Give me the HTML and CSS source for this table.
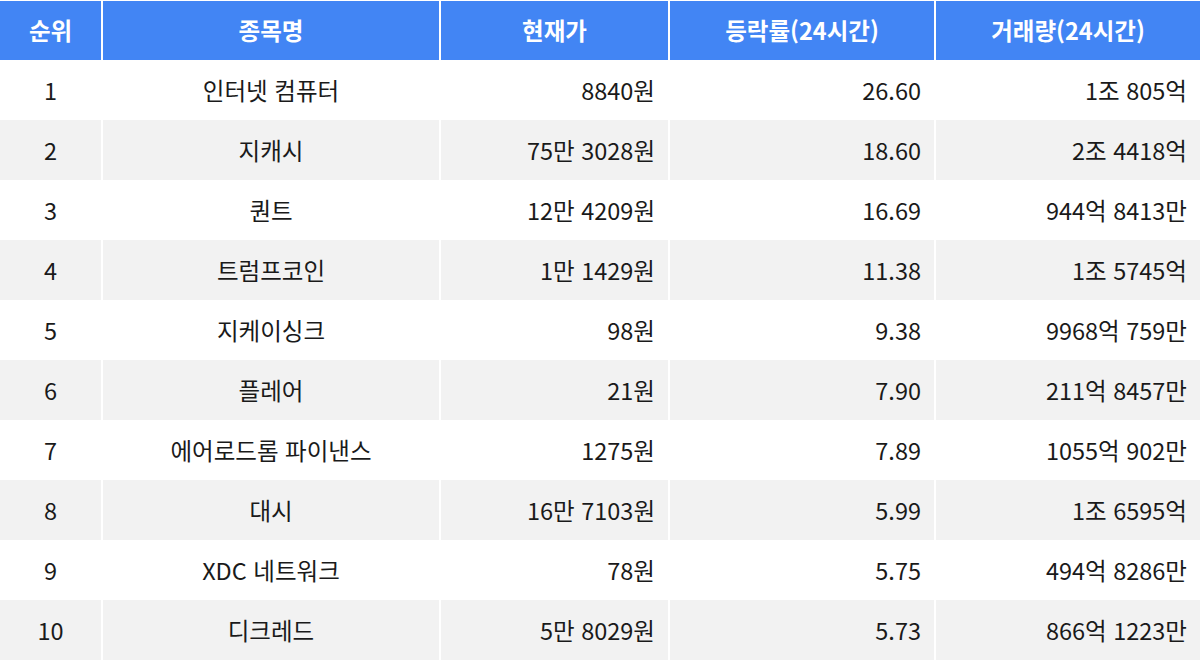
FILE: index.html
```html
<!DOCTYPE html>
<html lang="ko">
<head>
<meta charset="utf-8">
<link rel="stylesheet" href="styles.css">
</head>
<body>
<div class="table">
  <div class="row head">
    <div class="cell c">순위</div>
    <div class="cell c">종목명</div>
    <div class="cell c">현재가</div>
    <div class="cell c">등락률(24시간)</div>
    <div class="cell c">거래량(24시간)</div>
  </div>
  <div class="row">
    <div class="cell c">1</div><div class="cell c">인터넷 컴퓨터</div><div class="cell r">8840원</div><div class="cell r">26.60</div><div class="cell r">1조 805억</div>
  </div>
  <div class="row alt">
    <div class="cell c">2</div><div class="cell c">지캐시</div><div class="cell r">75만 3028원</div><div class="cell r">18.60</div><div class="cell r">2조 4418억</div>
  </div>
  <div class="row">
    <div class="cell c">3</div><div class="cell c">퀀트</div><div class="cell r">12만 4209원</div><div class="cell r">16.69</div><div class="cell r">944억 8413만</div>
  </div>
  <div class="row alt">
    <div class="cell c">4</div><div class="cell c">트럼프코인</div><div class="cell r">1만 1429원</div><div class="cell r">11.38</div><div class="cell r">1조 5745억</div>
  </div>
  <div class="row">
    <div class="cell c">5</div><div class="cell c">지케이싱크</div><div class="cell r">98원</div><div class="cell r">9.38</div><div class="cell r">9968억 759만</div>
  </div>
  <div class="row alt">
    <div class="cell c">6</div><div class="cell c">플레어</div><div class="cell r">21원</div><div class="cell r">7.90</div><div class="cell r">211억 8457만</div>
  </div>
  <div class="row">
    <div class="cell c">7</div><div class="cell c">에어로드롬 파이낸스</div><div class="cell r">1275원</div><div class="cell r">7.89</div><div class="cell r">1055억 902만</div>
  </div>
  <div class="row alt">
    <div class="cell c">8</div><div class="cell c">대시</div><div class="cell r">16만 7103원</div><div class="cell r">5.99</div><div class="cell r">1조 6595억</div>
  </div>
  <div class="row">
    <div class="cell c">9</div><div class="cell c">XDC 네트워크</div><div class="cell r">78원</div><div class="cell r">5.75</div><div class="cell r">494억 8286만</div>
  </div>
  <div class="row alt">
    <div class="cell c">10</div><div class="cell c">디크레드</div><div class="cell r">5만 8029원</div><div class="cell r">5.73</div><div class="cell r">866억 1223만</div>
  </div>
</div>
</body>
</html>
```
FILE: styles.css
```css
html, body {
  margin: 0;
  padding: 0;
  background: #ffffff;
}
body {
  font-family: "Noto Sans CJK KR", "Noto Sans", sans-serif;
  color: #1a1a1a;
}
.table {
  padding-top: 1px;
  width: 1200px;
}
.row {
  display: grid;
  grid-template-columns: 101px 336px 227px 264px 264px;
  column-gap: 2px;
  height: 60px;
}
.row.head {
  height: 59px;
}
.cell {
  display: flex;
  align-items: center;
  font-size: 23.5px;
  line-height: 1;
  padding-top: 2px;
}
.cell.c {
  justify-content: center;
}
.cell.r {
  justify-content: flex-end;
  padding-right: 13px;
}
.head .cell {
  background: #4285f4;
  color: #ffffff;
  font-weight: 700;
  padding-top: 0;
}
.alt .cell {
  background: #f2f2f2;
}
```
